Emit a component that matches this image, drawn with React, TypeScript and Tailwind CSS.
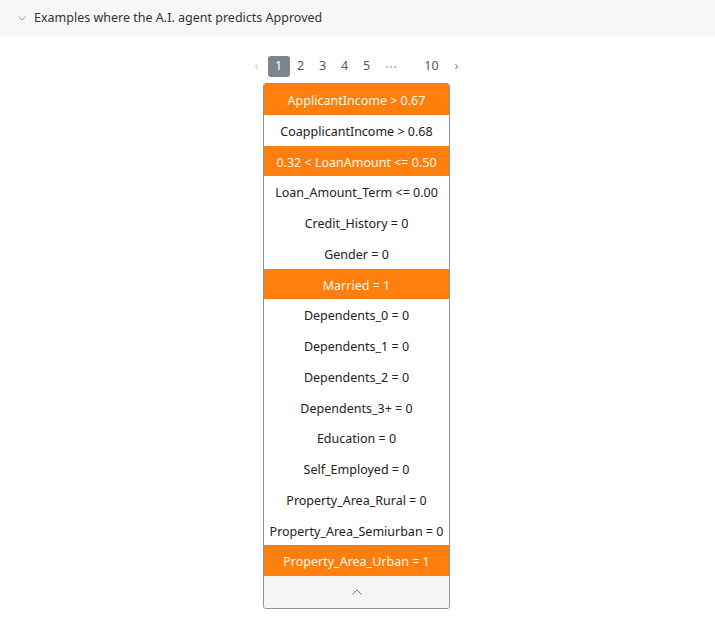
import React from "react";

const rows: { label: string; on: boolean }[] = [
  { label: "ApplicantIncome > 0.67", on: true },
  { label: "CoapplicantIncome > 0.68", on: false },
  { label: "0.32 < LoanAmount <= 0.50", on: true },
  { label: "Loan_Amount_Term <= 0.00", on: false },
  { label: "Credit_History = 0", on: false },
  { label: "Gender = 0", on: false },
  { label: "Married = 1", on: true },
  { label: "Dependents_0 = 0", on: false },
  { label: "Dependents_1 = 0", on: false },
  { label: "Dependents_2 = 0", on: false },
  { label: "Dependents_3+ = 0", on: false },
  { label: "Education = 0", on: false },
  { label: "Self_Employed = 0", on: false },
  { label: "Property_Area_Rural = 0", on: false },
  { label: "Property_Area_Semiurban = 0", on: false },
  { label: "Property_Area_Urban = 1", on: true },
];

export default function App() {
  return (
    <div
      className="w-[715px] h-[630px] bg-white text-[#333]"
      style={{ fontFamily: '"Noto Sans", "Open Sans", sans-serif' }}
    >
      <div className="h-[36px] bg-[#f7f7f7] flex items-center pl-[17px]">
        <svg width="10" height="10" viewBox="0 0 10 10" className="mr-[7px]">
          <path d="M1.5 3.5 L5 7 L8.5 3.5" fill="none" stroke="#999" strokeWidth="1" />
        </svg>
        <span className="text-[12.5px] text-[#333]">Examples where the A.I. agent predicts Approved</span>
      </div>
      <div className="flex flex-col items-center pt-[20px]">
        <div className="flex items-center h-[21px] text-[12.5px] text-[#555] ml-[-8px]">
          <span className="w-[24px] text-right pr-[9px] text-[#ccc]">‹</span>
          <span className="w-[22px] h-[21px] rounded-[3px] bg-[#7b8590] text-white flex items-center justify-center">1</span>
          <span className="w-[22px] text-center">2</span>
          <span className="w-[22px] text-center">3</span>
          <span className="w-[22px] text-center">4</span>
          <span className="w-[22px] text-center">5</span>
          <span className="w-[28px] text-center text-[#bbb] tracking-[1px] text-[9px]">•••</span>
          <span className="w-[36px] ml-[8px] text-center">10</span>
          <span className="w-[14px] text-center text-[#888]">›</span>
        </div>
        <div className="mt-[6px] ml-[-2px] w-[187px] border border-[#8c939b] rounded-[3px] overflow-hidden bg-white">
          {rows.map((r) => (
            <div
              key={r.label}
              className={
                "h-[30.75px] pt-[4px] flex items-center justify-center text-[12.5px] whitespace-nowrap " +
                (r.on ? "bg-[#ff7f0e] text-[#fff9ea]" : "bg-white text-[#222]")
              }
            >
              {r.label}
            </div>
          ))}
          <div className="h-[32px] bg-[#f5f5f5] flex items-center justify-center">
            <svg width="12" height="8" viewBox="0 0 12 8">
              <path d="M1.5 6.5 L6 2 L10.5 6.5" fill="none" stroke="#777" strokeWidth="1" />
            </svg>
          </div>
        </div>
      </div>
    </div>
  );
}
